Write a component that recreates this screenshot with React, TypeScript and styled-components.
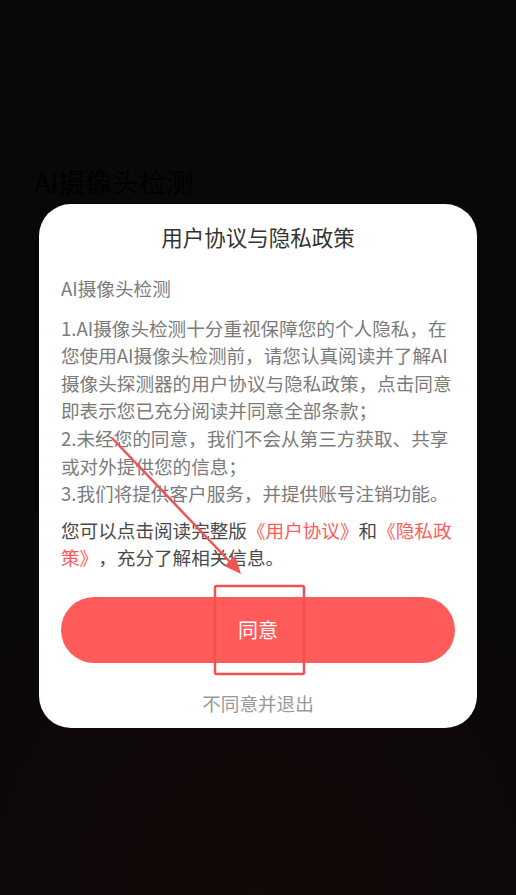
import styled, { createGlobalStyle } from "styled-components";

const GlobalStyle = createGlobalStyle`
  html, body {
    margin: 0;
    padding: 0;
    background: #fff;
  }
  * {
    box-sizing: border-box;
  }
  body {
    font-family: "Noto Sans CJK SC", "Noto Sans", "Liberation Sans", sans-serif;
    text-spacing-trim: space-all;
  }
`;

const Page = styled.div`
  position: relative;
  width: 100%;
  min-height: 100vh;
  background: #fff;
  padding: 162px 0 0 34px;
`;

const PageTitle = styled.h1`
  margin: 0;
  font-size: 27px;
  line-height: 40px;
  font-weight: 400;
  color: #000;
`;

const Overlay = styled.div`
  position: fixed;
  inset: 0;
  z-index: 2;
  display: flex;
  flex-direction: column;
  align-items: center;
  padding-top: 204px;
  background: radial-gradient(
    ellipse 90% 55% at 50% 100%,
    rgba(12, 0, 0, 0.968) 0%,
    rgba(6, 0, 0, 0.968) 55%,
    rgba(0, 0, 0, 0.968) 100%
  );
`;

const Modal = styled.div`
  width: 438px;
  border-radius: 32px;
  background: #fff;
  padding: 18px 22px 10px;
  display: flex;
  flex-direction: column;
`;

const ModalTitle = styled.div`
  font-size: 21.5px;
  line-height: 30px;
  color: #333;
  text-align: center;
`;

const Text = styled.p<{ $tone?: "muted" | "dark" }>`
  margin: 0;
  font-size: 18.6px;
  line-height: 27.6px;
  color: ${(p) => (p.$tone === "dark" ? "#4a4a4a" : "#7b7b7b")};
`;

const Subtitle = styled(Text)`
  margin-top: 22px;
`;

const Body = styled(Text)`
  margin-top: 12px;
  white-space: pre-line;
`;

const Notice = styled(Text)`
  margin-top: 9px;
`;

const Link = styled.span`
  color: #ff5a5a;
`;

const AgreeButton = styled.button`
  margin-top: 26px;
  height: 66px;
  width: 100%;
  border: none;
  border-radius: 33px;
  background: #ff5b5b;
  color: #fff;
  font-family: inherit;
  font-size: 20px;
  cursor: pointer;
`;

const DeclineButton = styled.button`
  margin-top: 25px;
  border: none;
  background: none;
  padding: 0;
  font-family: inherit;
  font-size: 18.6px;
  line-height: 30px;
  color: #999;
  cursor: pointer;
`;

const Annotation = styled.svg`
  position: fixed;
  left: 0;
  top: 0;
  z-index: 3;
  pointer-events: none;
`;

const bodyText = `1.AI摄像头检测十分重视保障您的个人隐私，在您使用AI摄像头检测前，请您认真阅读并了解AI摄像头探测器的用户协议与隐私政策，点击同意即表示您已充分阅读并同意全部条款；
2.未经您的同意，我们不会从第三方获取、共享或对外提供您的信息；
3.我们将提供客户服务，并提供账号注销功能。`;

export default function App() {
  return (
    <>
      <GlobalStyle />
      <Page>
        <PageTitle>AI摄像头检测</PageTitle>
      </Page>
      <Overlay>
        <Modal>
          <ModalTitle>用户协议与隐私政策</ModalTitle>
          <Subtitle>AI摄像头检测</Subtitle>
          <Body>{bodyText}</Body>
          <Notice $tone="dark">
            您可以点击阅读完整版<Link>《用户协议》</Link>和<Link>《隐私政策》</Link>，充分了解相关信息。
          </Notice>
          <AgreeButton>同意</AgreeButton>
          <DeclineButton>不同意并退出</DeclineButton>
        </Modal>
      </Overlay>
      <Annotation width="516" height="895" viewBox="0 0 516 895">
        <line x1="112" y1="438" x2="231" y2="563" stroke="#f25353" strokeWidth="2.5" />
        <polygon points="241,574 224.5,566 235,555.5" fill="#f25353" />
        <rect x="215" y="586" width="89" height="88" rx="1.5" fill="none" stroke="#f05252" strokeWidth="2.5" />
      </Annotation>
    </>
  );
}
